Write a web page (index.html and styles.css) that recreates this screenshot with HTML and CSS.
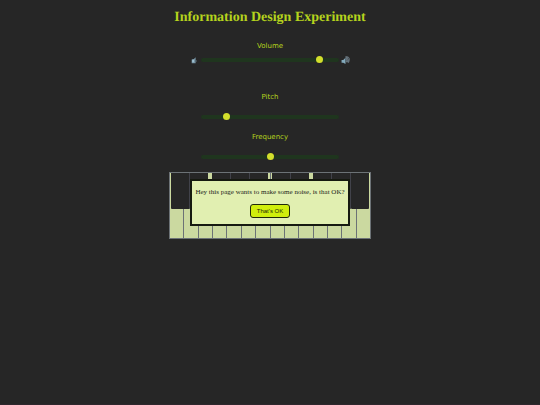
FILE: index.html
```html
<!DOCTYPE html>
<html lang="en">
<head>
<meta charset="UTF-8">
<meta name="viewport" content="width=device-width, initial-scale=1.0">
<title>Information Design Experiment</title>
<link rel="stylesheet" href="styles.css">
</head>
<body>

<h1>Information Design Experiment</h1>

<div class="controls">
  <div class="control volume">
    <label for="volume">Volume</label>
    <div class="slider-row">
      <svg class="icon" viewBox="0 0 16 16" aria-hidden="true">
        <path d="M3 6h3l4-4v11H3z" fill="#7795a5"/>
        <path d="M4 6h3v5H4z" fill="#a2c4d4"/>
        <path d="M10 6q4 2 0 6" fill="#546570"/>
      </svg>
      <input type="range" id="volume" min="0" max="100" value="88">
      <svg class="icon" viewBox="0 0 16 16" aria-hidden="true">
        <path d="M1 7h3l4-4v11l-4-2H1z" fill="#83aabc"/>
        <path d="M8 4q4 3 1 7M8 2q7 3 3 9M8 1q10 0 5 11" fill="none" stroke="#65737c" stroke-width="2"/>
      </svg>
    </div>
  </div>
  <div class="control pitch">
    <label for="pitch">Pitch</label>
    <input type="range" id="pitch" min="0" max="100" value="17">
  </div>
  <div class="control">
    <label for="frequency">Frequency</label>
    <input type="range" id="frequency" min="0" max="100" value="50">
  </div>
</div>

<div class="piano">
  <div class="white-keys">
    <span></span><span></span><span></span><span></span><span></span><span></span><span></span>
    <span></span><span></span><span></span><span></span><span></span><span></span><span></span>
  </div>
  <div class="black-keys">
    <div class="octave">
      <div class="group"><span></span><span></span></div>
      <div class="group"><span></span><span></span><span></span></div>
    </div>
    <div class="octave">
      <div class="group"><span></span><span></span></div>
      <div class="group"><span></span><span></span><span></span></div>
    </div>
  </div>

  <div class="modal" role="dialog" aria-labelledby="message">
    <p id="message">Hey this page wants to make some noise, is that OK?</p>
    <button type="button" id="okBtn">That's OK</button>
  </div>
</div>

<script>
  document.getElementById('okBtn').addEventListener('click', function() {
    document.querySelector('.modal').hidden = true;
  });
</script>

</body>
</html>
```
FILE: styles.css
```css
* {
  box-sizing: border-box;
}
body {
  margin: 0;
  min-height: 100vh;
  background-color: #262626;
  border-bottom: 1px solid #2f272d;
  color: #b5d31d;
  display: flex;
  flex-direction: column;
  align-items: center;
}
h1 {
  margin: 10px 0 15px;
  font-family: "Liberation Serif", serif;
  font-size: 14px;
  line-height: 16px;
  text-rendering: geometricPrecision;
}
.controls {
  font-family: "DejaVu Sans", sans-serif;
  font-size: 7px;
  line-height: 10px;
}
.control {
  display: flex;
  flex-direction: column;
  align-items: center;
  gap: 10px;
  margin-bottom: 10px;
}
.volume {
  gap: 4px;
  margin-bottom: 27px;
}
.slider-row {
  display: flex;
  align-items: center;
  gap: 2px;
}
.icon {
  width: 9px;
  height: 9px;
}
input[type="range"] {
  -webkit-appearance: none;
  appearance: none;
  width: 138px;
  height: 10px;
  margin: 0;
  background: transparent;
}
input[type="range"]::-webkit-slider-runnable-track {
  height: 4px;
  border-radius: 2px;
  background-color: #1f351e;
}
input[type="range"]::-webkit-slider-thumb {
  -webkit-appearance: none;
  width: 7px;
  height: 7px;
  margin-top: -2px;
  border-radius: 50%;
  background-color: #d3df2c;
}
.piano {
  position: relative;
  width: 202px;
}
.white-keys {
  display: flex;
  height: 67px;
  border: 1px solid #6c7276;
}
.white-keys span {
  flex: 1;
  background-color: #cbd9a0;
  border-right: 1px solid #6c7276;
}
.white-keys span:last-child {
  border-right: none;
}
.black-keys {
  position: absolute;
  top: 1px;
  left: 0;
  right: 0;
  display: flex;
}
.octave {
  flex: 1;
  display: grid;
  grid-template-columns: 2fr 3fr;
  gap: 4px;
  padding: 0 2px;
}
.group {
  display: flex;
}
.black-keys span {
  flex: 1;
  height: 36px;
  background-color: #262626;
  border-right: 1px solid #41424a;
  border-radius: 0 0 1px 1px;
}
.black-keys span:last-child {
  border-right: none;
}
.modal {
  position: absolute;
  top: 7px;
  left: 21px;
  right: 21px;
  padding: 6px 0;
  border: 2px solid #161a10;
  background-color: #e1efb1;
  color: #202419;
  text-align: center;
  white-space: nowrap;
}
.modal[hidden] {
  display: none;
}
.modal p {
  margin: 0 0 7px;
  font-family: "Liberation Serif", serif;
  font-size: 7px;
  line-height: 10px;
}
.modal button {
  display: block;
  margin: 0 auto;
  padding: 1px 6px;
  border: 1px solid #202808;
  border-radius: 3px;
  background-color: #d0ee0c;
  color: #202808;
  font-family: "Liberation Sans", sans-serif;
  font-size: 6px;
  line-height: 10px;
}
```
